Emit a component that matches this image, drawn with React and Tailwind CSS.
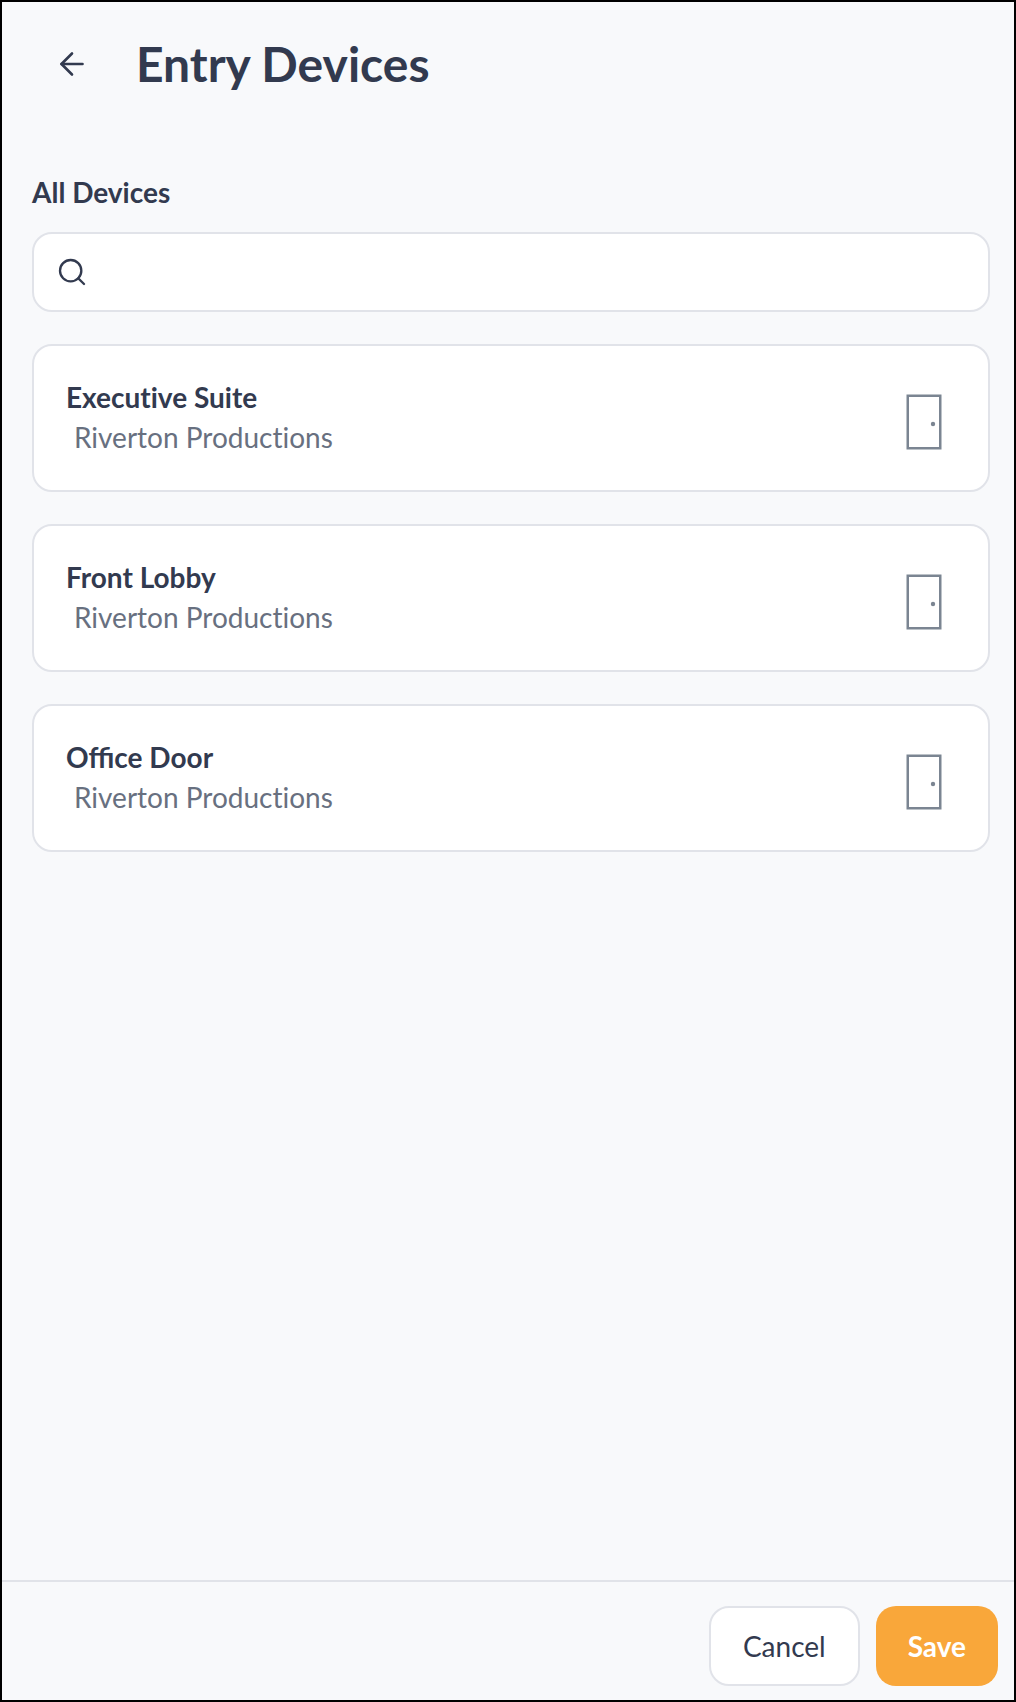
import { ArrowLeft, Search } from 'lucide-react';
import clsx from 'clsx';

const devices = [
  { name: 'Executive Suite', site: 'Riverton Productions' },
  { name: 'Front Lobby', site: 'Riverton Productions' },
  { name: 'Office Door', site: 'Riverton Productions', ligatures: true },
];

function DoorIcon() {
  return (
    <svg width="36" height="56" viewBox="0 0 36 56" fill="none" aria-hidden="true">
      <rect x="1.75" y="1.75" width="32.5" height="52.5" stroke="#7b8592" strokeWidth="2.5" />
      <circle cx="27" cy="30" r="2.2" fill="#7b8592" />
    </svg>
  );
}

function DeviceCard({ device }) {
  return (
    <li className="flex items-center justify-between rounded-[20px] border-2 border-[#e1e3e9] bg-white py-8 pl-8 pr-[46px]">
      <div>
        <h3
          className={clsx(
            'text-[28px] font-bold leading-[38px]',
            !device.ligatures && '[font-variant-ligatures:none]'
          )}
        >
          {device.name}
        </h3>
        <p className="pl-2 text-[28px] leading-[42px] text-[#687080] [font-variant-ligatures:none]">{device.site}</p>
      </div>
      <div className="pt-2">
        <DoorIcon />
      </div>
    </li>
  );
}

export default function App() {
  return (
    <div className="flex min-h-screen flex-col border-2 border-black bg-[#f8f9fb] font-['Lato',sans-serif] text-[#323a4f]">
      <header className="flex items-center gap-[46px] px-[52px] pt-8">
        <button type="button" aria-label="Back">
          <ArrowLeft size={36} strokeWidth={1.75} />
        </button>
        <h1 className="text-[48px] font-bold leading-[60px]">Entry Devices</h1>
      </header>

      <main className="flex flex-1 flex-col pl-[30px] pr-6 pt-[78px]">
        <label htmlFor="device-search" className="text-[28px] font-bold leading-[40px]">
          All Devices
        </label>
        <div className="mt-5 flex h-20 items-center gap-4 rounded-[20px] border-2 border-[#e1e3e9] bg-white px-[22px]">
          <Search size={32} strokeWidth={1.75} />
          <input id="device-search" type="search" className="h-full flex-1 bg-transparent text-[28px] outline-none" />
        </div>
        <ul className="mt-8 flex flex-col gap-8">
          {devices.map((d) => (
            <DeviceCard key={d.name} device={d} />
          ))}
        </ul>
      </main>

      <footer className="flex justify-end gap-4 border-t-2 border-[#e1e3e9] px-4 pb-[14px] pt-6">
        <button type="button" className="h-20 rounded-[20px] border-2 border-[#e1e3e9] bg-white px-8 text-[28px]">
          Cancel
        </button>
        <button type="button" className="h-20 rounded-[20px] bg-[#f9a73a] px-8 text-[28px] font-bold text-white">
          Save
        </button>
      </footer>
    </div>
  );
}
